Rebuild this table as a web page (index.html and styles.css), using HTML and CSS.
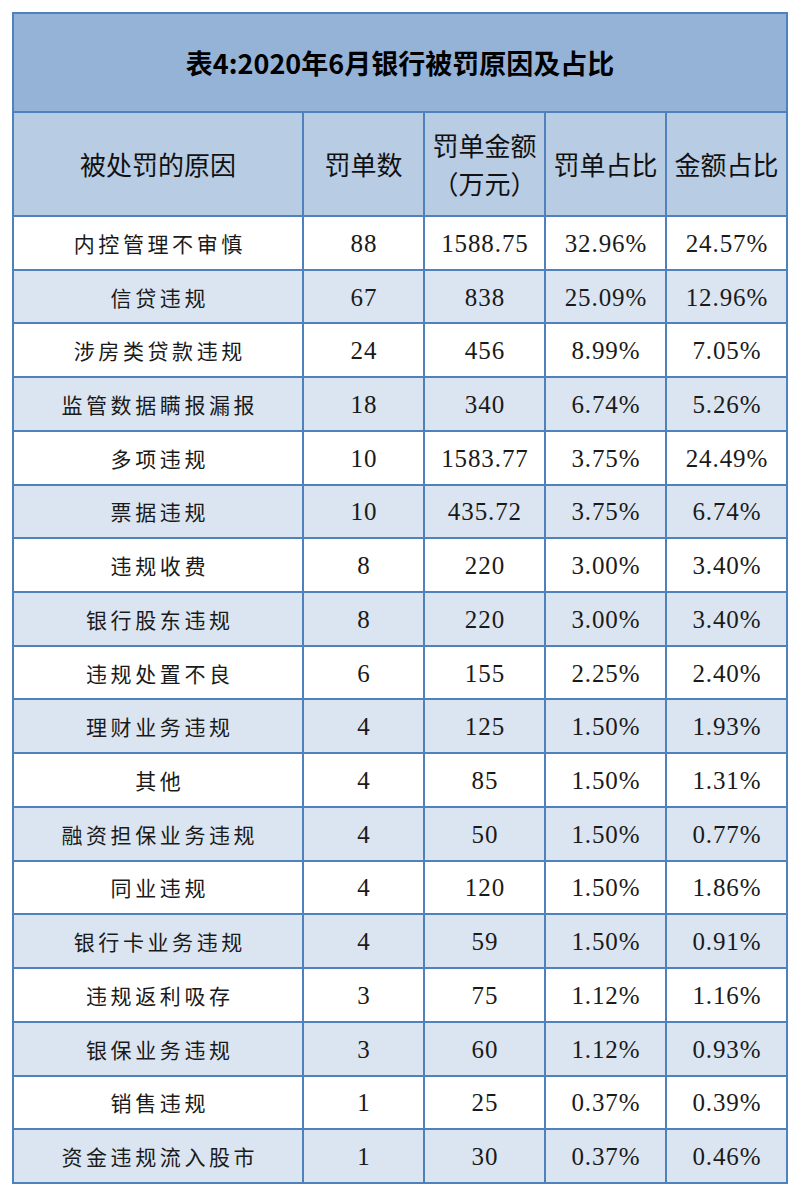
FILE: index.html
```html
<!DOCTYPE html>
<html lang="zh-CN">
<head>
<meta charset="utf-8">
<title>表4:2020年6月银行被罚原因及占比</title>
<link rel="stylesheet" href="styles.css">
</head>
<body>
<table class="sheet">
  <colgroup>
    <col class="c-reason">
    <col class="c-num">
    <col class="c-num">
    <col class="c-num">
    <col class="c-num">
  </colgroup>
  <thead>
    <tr class="title-row"><th colspan="5" class="title">表4:2020年6月银行被罚原因及占比</th></tr>
    <tr class="head-row">
      <th>被处罚的原因</th>
      <th>罚单数</th>
      <th>罚单金额<br><span class="po">（</span>万元<span class="pc">）</span></th>
      <th>罚单占比</th>
      <th>金额占比</th>
    </tr>
  </thead>
  <tbody>
    <tr><td class="cn">内控管理不审慎</td><td>88</td><td>1588.75</td><td>32.96%</td><td>24.57%</td></tr>
    <tr><td class="cn">信贷违规</td><td>67</td><td>838</td><td>25.09%</td><td>12.96%</td></tr>
    <tr><td class="cn">涉房类贷款违规</td><td>24</td><td>456</td><td>8.99%</td><td>7.05%</td></tr>
    <tr><td class="cn">监管数据瞒报漏报</td><td>18</td><td>340</td><td>6.74%</td><td>5.26%</td></tr>
    <tr><td class="cn">多项违规</td><td>10</td><td>1583.77</td><td>3.75%</td><td>24.49%</td></tr>
    <tr><td class="cn">票据违规</td><td>10</td><td>435.72</td><td>3.75%</td><td>6.74%</td></tr>
    <tr><td class="cn">违规收费</td><td>8</td><td>220</td><td>3.00%</td><td>3.40%</td></tr>
    <tr><td class="cn">银行股东违规</td><td>8</td><td>220</td><td>3.00%</td><td>3.40%</td></tr>
    <tr><td class="cn">违规处置不良</td><td>6</td><td>155</td><td>2.25%</td><td>2.40%</td></tr>
    <tr><td class="cn">理财业务违规</td><td>4</td><td>125</td><td>1.50%</td><td>1.93%</td></tr>
    <tr><td class="cn">其他</td><td>4</td><td>85</td><td>1.50%</td><td>1.31%</td></tr>
    <tr><td class="cn">融资担保业务违规</td><td>4</td><td>50</td><td>1.50%</td><td>0.77%</td></tr>
    <tr><td class="cn">同业违规</td><td>4</td><td>120</td><td>1.50%</td><td>1.86%</td></tr>
    <tr><td class="cn">银行卡业务违规</td><td>4</td><td>59</td><td>1.50%</td><td>0.91%</td></tr>
    <tr><td class="cn">违规返利吸存</td><td>3</td><td>75</td><td>1.12%</td><td>1.16%</td></tr>
    <tr><td class="cn">银保业务违规</td><td>3</td><td>60</td><td>1.12%</td><td>0.93%</td></tr>
    <tr><td class="cn">销售违规</td><td>1</td><td>25</td><td>0.37%</td><td>0.39%</td></tr>
    <tr><td class="cn">资金违规流入股市</td><td>1</td><td>30</td><td>0.37%</td><td>0.46%</td></tr>
  </tbody>
</table>
</body>
</html>
```

FILE: styles.css
```css
html, body {
  margin: 0;
  padding: 0;
  background: #ffffff;
}

body {
  padding: 12px 0 0 12px;
  font-family: "Noto Sans CJK SC", "Noto Sans", sans-serif;
  color: #111111;
}

.sheet {
  table-layout: fixed;
  border-collapse: separate;
  border-spacing: 0;
  width: 776px;
  border-top: 2px solid #4f81bd;
  border-left: 2px solid #4f81bd;
}

.c-reason { width: 290px; }
.c-num { width: 121px; }

.sheet th,
.sheet td {
  box-sizing: border-box;
  padding: 0;
  border-right: 2px solid #4f81bd;
  border-bottom: 2px solid #4f81bd;
  text-align: center;
  vertical-align: middle;
}

.title-row { height: 99px; }

.title {
  background: #95b3d7;
  font-size: 27px;
  font-weight: 700;
  color: #000000;
  padding-bottom: 2px;
}

.head-row { height: 104px; }

.head-row th {
  background: #b8cce4;
  font-size: 26px;
  font-weight: 400;
  line-height: 38px;
  color: #111111;
  padding: 0 1px;
}

.po,
.pc {
  display: inline-block;
  width: 1em;
}

.po { text-align: center; }
.pc { text-align: center; }

.sheet tbody tr { height: 53.72px; }

.sheet tbody tr:nth-child(even) td {
  background: #dbe5f1;
}

.sheet tbody tr:nth-child(odd) td {
  background: #ffffff;
}

.sheet tbody td {
  font-family: "Liberation Serif", "Times New Roman", serif;
  font-size: 25px;
  letter-spacing: 0.9px;
  padding-left: 0.9px;
  color: #1a1a1a;
  padding-top: 2px;
}

.sheet tbody td.cn {
  font-family: "Noto Sans CJK SC", "Noto Sans", sans-serif;
  font-size: 21px;
  letter-spacing: 3.6px;
  padding-left: 3.6px;
  padding-top: 0;
  color: #1a1a1a;
}
```
